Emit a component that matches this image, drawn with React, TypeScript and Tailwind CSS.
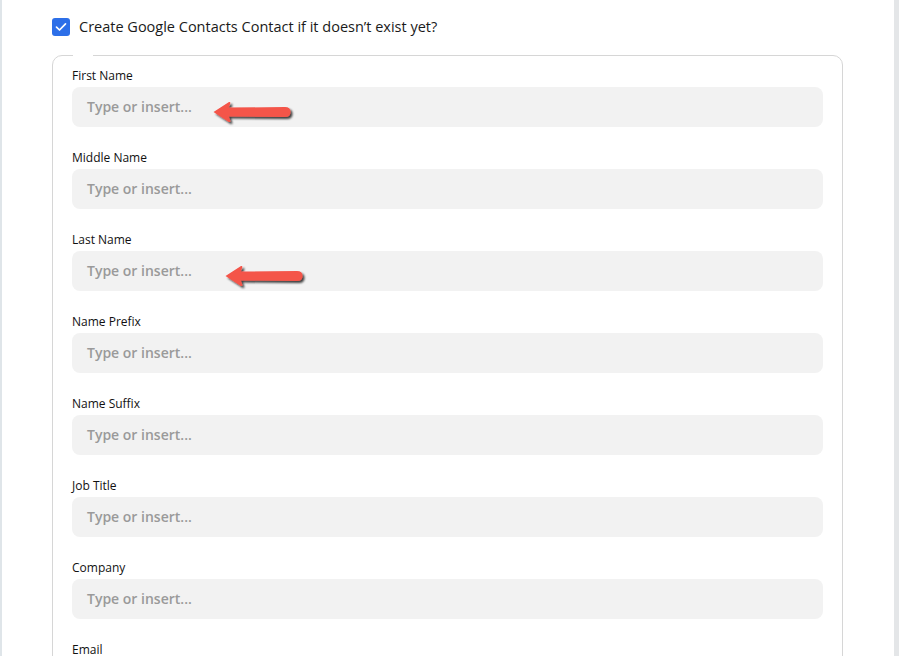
import React from "react";

const fields = [
  "First Name",
  "Middle Name",
  "Last Name",
  "Name Prefix",
  "Name Suffix",
  "Job Title",
  "Company",
  "Email",
];

function Arrow({ className }: { className: string }) {
  return (
    <svg
      className={className}
      width="86"
      height="30"
      viewBox="0 0 86 30"
      xmlns="http://www.w3.org/2000/svg"
    >
      <defs>
        <filter id="sh" x="-20%" y="-40%" width="140%" height="180%">
          <feGaussianBlur in="SourceAlpha" stdDeviation="1.2" />
          <feOffset dx="2" dy="2" result="o" />
          <feComponentTransfer>
            <feFuncA type="linear" slope="0.75" />
          </feComponentTransfer>
          <feMerge>
            <feMergeNode />
            <feMergeNode in="SourceGraphic" />
          </feMerge>
        </filter>
      </defs>
      <path
        d="M1.5 12 L17 2 Q18.8 1.5 18.2 3.8 L16.8 7.6 L73 7 Q78.5 7 78.5 12 Q78.5 17 73 17 L16.8 16.5 L18.2 20.3 Q18.8 22.5 16.8 22 Z"
        fill="#f4554a"
        filter="url(#sh)"
      />
    </svg>
  );
}

export default function App() {
  return (
    <div
      className="relative w-[899px] h-[656px] overflow-hidden bg-white flex"
      style={{ fontFamily: '"Open Sans", "Noto Sans", sans-serif' }}
    >
      <div className="w-[2px] h-full bg-[#dfe5e9]" />
      <div className="flex-1 h-full pl-[50px] pr-[51px] pt-[17px]">
        <div className="flex items-center gap-[9px] h-[20px]">
          <div className="w-[18px] h-[18px] rounded-[3px] bg-[#2d6fe8] flex items-center justify-center">
            <svg width="12" height="10" viewBox="0 0 12 10">
              <path
                d="M1.5 5.2 L4.5 8 L10.5 1.8"
                fill="none"
                stroke="white"
                strokeWidth="1.7"
                strokeLinecap="round"
                strokeLinejoin="round"
              />
            </svg>
          </div>
          <span className="text-[14.5px] text-[#1a1a1a] leading-5">
            Create Google Contacts Contact if it doesn’t exist yet?
          </span>
        </div>
        <div className="relative mt-[18px] border border-[#d6d6d6] rounded-[10px] px-[19px] pt-[12px] flex flex-col gap-[23px]">
          <div className="absolute top-[-1px] left-[20px] w-[20px] h-[2px] bg-white" />
          {fields.map((f, i) => (
            <div key={f} className="flex flex-col gap-[3px] relative">
              <label className="text-[12px] leading-4 font-medium text-[#111]">
                {f}
              </label>
              <div className="h-[40px] rounded-[8px] bg-[#f2f2f2] flex items-center px-[15px] pb-[2px]">
                <span className="text-[14px] font-semibold text-[#9a9a9a]">
                  Type or insert...
                </span>
              </div>
              {i === 0 && (
                <Arrow className="absolute left-[140px] top-[32px]" />
              )}
              {i === 2 && (
                <Arrow className="absolute left-[152px] top-[32px]" />
              )}
            </div>
          ))}
        </div>
      </div>
      <div className="w-[5px] h-full bg-[#e4e6e8]" />
    </div>
  );
}
